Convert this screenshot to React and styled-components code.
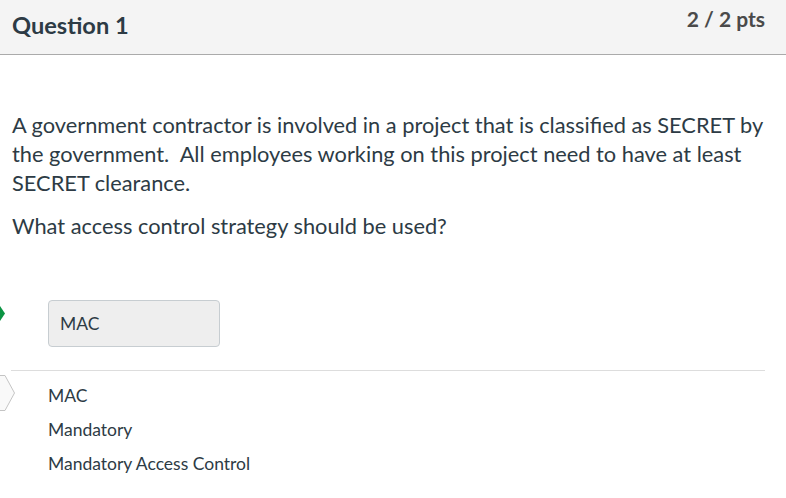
import React from 'react'
import styled, { createGlobalStyle } from 'styled-components'

const GlobalStyle = createGlobalStyle`
    body {
        margin: 0;
        background: #fff;
        font-family: Lato, "Open Sans", sans-serif;
        color: #2d3b45;
    }
`

const Card = styled.div`
    width: 786px;
    height: 498px;
    overflow: hidden;
    position: relative;
`

const Header = styled.div`
    height: 55px;
    background: #f4f4f4;
    border-bottom: 1px solid #aaaaaa;
    display: flex;
    align-items: flex-start;
    justify-content: space-between;
    padding: 0 21px 0 12px;
    box-sizing: border-box;
`

const Title = styled.h2`
    margin: 11px 0 0;
    font-size: 23.6px;
    font-weight: 700;
    color: #2d3b45;
`

const Points = styled.div`
    margin-top: 6px;
    font-size: 21px;
    font-weight: 700;
    color: #4a4a4a;
`

const Body = styled.div`
    padding: 55px 20px 0 12px;
`

const Para = styled.p`
    margin: 0 0 ${p => p.gap || 0}px;
    font-size: 21.8px;
    line-height: 29px;
    color: #2d3b45;
`

const Answers = styled.div`
    margin-top: 60px;
    padding-left: 48px;
    position: relative;
`

const Marker = styled.svg`
    position: absolute;
    left: 0;
    top: ${p => p.top}px;
`

const AnswerBox = styled.div`
    width: 172px;
    height: 47px;
    box-sizing: border-box;
    background: #eeeeee;
    border: 1px solid #c7cdd1;
    border-radius: 4px;
    display: flex;
    align-items: center;
    padding-left: 11px;
    font-size: 17.5px;
    color: #2d3b45;
`

const Divider = styled.hr`
    border: none;
    border-top: 1px solid #dddddd;
    margin: 23px 21px 0 -37px;
`

const AltList = styled.ul`
    list-style: none;
    margin: 0;
    padding: 8px 0 0;
`

const AltItem = styled.li`
    font-size: 17.5px;
    line-height: 34px;
    color: #2d3b45;
`

const alternatives = ['MAC', 'Mandatory', 'Mandatory Access Control']

export default function App() {
    return (
        <Card>
            <GlobalStyle />
            <Header>
                <Title>Question 1</Title>
                <Points>2 / 2 pts</Points>
            </Header>
            <Body>
                <Para gap={14}>
                    A government contractor is involved in a project that is classified as SECRET by the government.&nbsp; All employees working on this project need to have at least SECRET clearance.
                </Para>
                <Para>What access control strategy should be used?</Para>
            </Body>
            <Answers>
                <Marker top={6} width="6" height="15" viewBox="0 0 6 15">
                    <path d="M0 0 L5 7.5 L0 15 Z" fill="#0b9443" />
                </Marker>
                <Marker top={75} width="16" height="36" viewBox="0 0 16 36">
                    <path d="M-2 0.5 L5 0.5 L14.5 18 L5 35.5 L-2 35.5 Z" fill="#f9f9f9" stroke="#c4c4c4" strokeWidth="1" />
                </Marker>
                <AnswerBox>MAC</AnswerBox>
                <Divider />
                <AltList>
                    {alternatives.map(a => <AltItem key={a}>{a}</AltItem>)}
                </AltList>
            </Answers>
        </Card>
    )
}
